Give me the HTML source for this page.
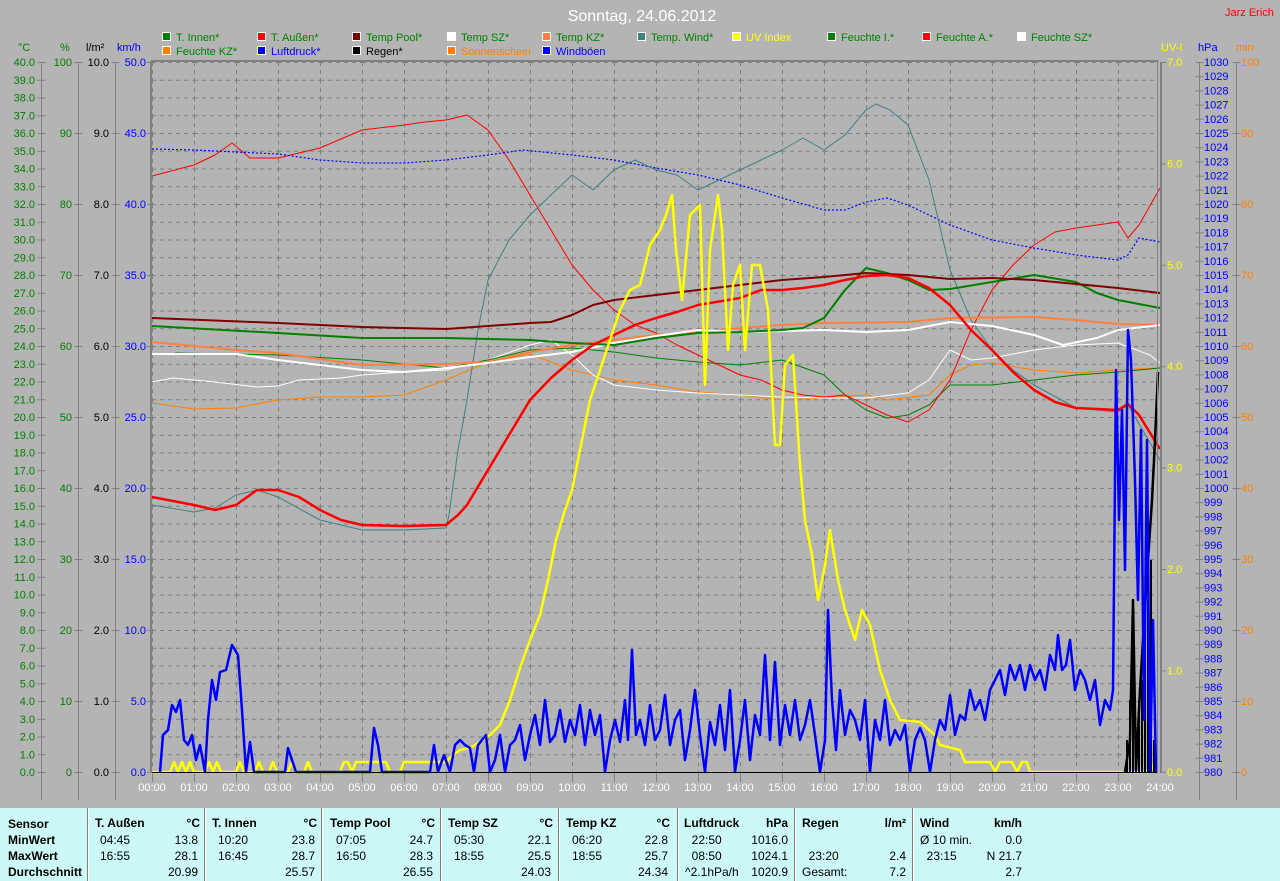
<!DOCTYPE html>
<html><head><meta charset="utf-8"><style>
body{margin:0;width:1280px;height:881px;overflow:hidden;background:#b4b4b4;font-family:"Liberation Sans",sans-serif}
svg{position:absolute;left:0;top:0}
.tb{position:absolute;left:0;top:808px;width:1280px;height:73px;background:#ccf8f8}
.c{position:absolute;font-size:12px;color:#000;white-space:nowrap}
.b{font-weight:bold}
.r{text-align:right}
.sep{position:absolute;top:0;width:1px;height:73px;background:#808080;border-right:1px solid #fff}
</style></head><body>
<svg width="1280" height="808" viewBox="0 0 1280 808" font-family="Liberation Sans, sans-serif">
<defs>
<pattern id="g" x="152" y="62" width="42" height="17.75" patternUnits="userSpaceOnUse">
<line x1="0" y1="0.5" x2="42" y2="0.5" stroke="#808080" stroke-dasharray="4,4"/>
<line x1="0.5" y1="0" x2="0.5" y2="17.75" stroke="#808080" stroke-dasharray="4,4"/>
</pattern>
</defs>
<rect x="152" y="62" width="1006" height="710" fill="url(#g)"/>
<text x="642" y="21" font-size="16" fill="#fff" text-anchor="middle">Sonntag, 24.06.2012</text>
<text x="1225" y="16" font-size="11" fill="#f00">Jarz Erich</text>
<g font-size="11">
<g stroke="#fff" stroke-width="1">
<rect x="162.5" y="32.5" width="8" height="8" fill="#008000"/><rect x="257.5" y="32.5" width="8" height="8" fill="#f00"/><rect x="352.5" y="32.5" width="8" height="8" fill="#800000"/><rect x="447.5" y="32.5" width="8" height="8" fill="#fff"/><rect x="542.5" y="32.5" width="8" height="8" fill="#ff8040"/><rect x="637.5" y="32.5" width="8" height="8" fill="#408080"/><rect x="732.5" y="32.5" width="8" height="8" fill="#ff0"/><rect x="827.5" y="32.5" width="8" height="8" fill="#008000"/><rect x="922.5" y="32.5" width="8" height="8" fill="#f00"/><rect x="1017.5" y="32.5" width="8" height="8" fill="#fff"/>
<rect x="162.5" y="46.5" width="8" height="8" fill="#ff8000"/><rect x="257.5" y="46.5" width="8" height="8" fill="#00f"/><rect x="352.5" y="46.5" width="8" height="8" fill="#000"/><rect x="447.5" y="46.5" width="8" height="8" fill="#ff8000"/><rect x="542.5" y="46.5" width="8" height="8" fill="#00f"/>
</g>
<text x="176" y="41" fill="#008000">T. Innen*</text><text x="271" y="41" fill="#008000">T. Außen*</text><text x="366" y="41" fill="#008000">Temp Pool*</text><text x="461" y="41" fill="#008000">Temp SZ*</text><text x="556" y="41" fill="#008000">Temp KZ*</text><text x="651" y="41" fill="#008000">Temp. Wind*</text><text x="746" y="41" fill="#ff0">UV Index</text><text x="841" y="41" fill="#008000">Feuchte I.*</text><text x="936" y="41" fill="#008000">Feuchte A.*</text><text x="1031" y="41" fill="#008000">Feuchte SZ*</text>
<text x="176" y="55" fill="#008000">Feuchte KZ*</text><text x="271" y="55" fill="#00f">Luftdruck*</text><text x="366" y="55" fill="#000">Regen*</text><text x="461" y="55" fill="#ff8000">Sonnenschein</text><text x="556" y="55" fill="#00f">Windböen</text>
<text x="18" y="51" fill="#008000">°C</text><text x="60" y="51" fill="#008000">%</text><text x="86" y="51" fill="#000">l/m²</text><text x="117" y="51" fill="#00f">km/h</text>
<text x="1161" y="51" fill="#ff0">UV-I</text><text x="1198" y="51" fill="#00f">hPa</text><text x="1236" y="51" fill="#ff8000">min</text>
</g>
<g stroke="#808080" fill="none">
<line x1="41.5" y1="62" x2="41.5" y2="800"/><line x1="78.5" y1="62" x2="78.5" y2="800"/><line x1="115.5" y1="62" x2="115.5" y2="800"/>
<line x1="1199.5" y1="62" x2="1199.5" y2="800"/><line x1="1236.5" y1="62" x2="1236.5" y2="800"/>
<line x1="41.5" y1="62" x2="41.5" y2="773" stroke-width="8" stroke-dasharray="1,16.75"/>
<line x1="78.5" y1="62" x2="78.5" y2="773" stroke-width="8" stroke-dasharray="1,70"/>
<line x1="115.5" y1="62" x2="115.5" y2="773" stroke-width="8" stroke-dasharray="1,70"/>
<line x1="150" y1="62" x2="150" y2="773" stroke-width="6" stroke-dasharray="1,70"/>
<line x1="1163" y1="62" x2="1163" y2="773" stroke-width="6" stroke-dasharray="1,100.4"/>
<line x1="1199.5" y1="62" x2="1199.5" y2="773" stroke-width="8" stroke-dasharray="1,13.2"/>
<line x1="1236.5" y1="62" x2="1236.5" y2="773" stroke-width="8" stroke-dasharray="1,70"/>
<line x1="152" y1="772" x2="1160" y2="772" stroke-width="10" stroke-dasharray="1,41" transform="translate(0,5)"/>
</g>
<g font-size="11" fill="#008000" text-anchor="end">
<text x="35" y="66">40.0</text><text x="35" y="83.75">39.0</text><text x="35" y="101.5">38.0</text><text x="35" y="119.25">37.0</text><text x="35" y="137">36.0</text><text x="35" y="154.75">35.0</text><text x="35" y="172.5">34.0</text><text x="35" y="190.25">33.0</text><text x="35" y="208">32.0</text><text x="35" y="225.75">31.0</text><text x="35" y="243.5">30.0</text><text x="35" y="261.25">29.0</text><text x="35" y="279">28.0</text><text x="35" y="296.75">27.0</text><text x="35" y="314.5">26.0</text><text x="35" y="332.25">25.0</text><text x="35" y="350">24.0</text><text x="35" y="367.75">23.0</text><text x="35" y="385.5">22.0</text><text x="35" y="403.25">21.0</text><text x="35" y="421">20.0</text><text x="35" y="438.75">19.0</text><text x="35" y="456.5">18.0</text><text x="35" y="474.25">17.0</text><text x="35" y="492">16.0</text><text x="35" y="509.75">15.0</text><text x="35" y="527.5">14.0</text><text x="35" y="545.25">13.0</text><text x="35" y="563">12.0</text><text x="35" y="580.75">11.0</text><text x="35" y="598.5">10.0</text><text x="35" y="616.25">9.0</text><text x="35" y="634">8.0</text><text x="35" y="651.75">7.0</text><text x="35" y="669.5">6.0</text><text x="35" y="687.25">5.0</text><text x="35" y="705">4.0</text><text x="35" y="722.75">3.0</text><text x="35" y="740.5">2.0</text><text x="35" y="758.25">1.0</text><text x="35" y="776">0.0</text>
<text x="72" y="66">100</text><text x="72" y="137">90</text><text x="72" y="208">80</text><text x="72" y="279">70</text><text x="72" y="350">60</text><text x="72" y="421">50</text><text x="72" y="492">40</text><text x="72" y="563">30</text><text x="72" y="634">20</text><text x="72" y="705">10</text><text x="72" y="776">0</text>
<g fill="#000"><text x="109" y="66">10.0</text><text x="109" y="137">9.0</text><text x="109" y="208">8.0</text><text x="109" y="279">7.0</text><text x="109" y="350">6.0</text><text x="109" y="421">5.0</text><text x="109" y="492">4.0</text><text x="109" y="563">3.0</text><text x="109" y="634">2.0</text><text x="109" y="705">1.0</text><text x="109" y="776">0.0</text></g>
<g fill="#00f"><text x="146" y="66">50.0</text><text x="146" y="137">45.0</text><text x="146" y="208">40.0</text><text x="146" y="279">35.0</text><text x="146" y="350">30.0</text><text x="146" y="421">25.0</text><text x="146" y="492">20.0</text><text x="146" y="563">15.0</text><text x="146" y="634">10.0</text><text x="146" y="705">5.0</text><text x="146" y="776">0.0</text></g>
</g>
<g font-size="11" fill="#ff0">
<text x="1167" y="66">7.0</text><text x="1167" y="167.4">6.0</text><text x="1167" y="268.8">5.0</text><text x="1167" y="370.2">4.0</text><text x="1167" y="471.6">3.0</text><text x="1167" y="573">2.0</text><text x="1167" y="674.4">1.0</text><text x="1167" y="776">0.0</text>
</g>
<g font-size="11" fill="#ff8000">
<text x="1241" y="66">100</text><text x="1241" y="137">90</text><text x="1241" y="208">80</text><text x="1241" y="279">70</text><text x="1241" y="350">60</text><text x="1241" y="421">50</text><text x="1241" y="492">40</text><text x="1241" y="563">30</text><text x="1241" y="634">20</text><text x="1241" y="705">10</text><text x="1241" y="776">0</text>
</g>
<g font-size="11" fill="#00f">
<text x="1204" y="66">1030</text><text x="1204" y="80.2">1029</text><text x="1204" y="94.4">1028</text><text x="1204" y="108.6">1027</text><text x="1204" y="122.8">1026</text><text x="1204" y="137">1025</text><text x="1204" y="151.2">1024</text><text x="1204" y="165.4">1023</text><text x="1204" y="179.6">1022</text><text x="1204" y="193.8">1021</text><text x="1204" y="208">1020</text><text x="1204" y="222.2">1019</text><text x="1204" y="236.4">1018</text><text x="1204" y="250.6">1017</text><text x="1204" y="264.8">1016</text><text x="1204" y="279">1015</text><text x="1204" y="293.2">1014</text><text x="1204" y="307.4">1013</text><text x="1204" y="321.6">1012</text><text x="1204" y="335.8">1011</text><text x="1204" y="350">1010</text><text x="1204" y="364.2">1009</text><text x="1204" y="378.4">1008</text><text x="1204" y="392.6">1007</text><text x="1204" y="406.8">1006</text><text x="1204" y="421">1005</text><text x="1204" y="435.2">1004</text><text x="1204" y="449.4">1003</text><text x="1204" y="463.6">1002</text><text x="1204" y="477.8">1001</text><text x="1204" y="492">1000</text><text x="1204" y="506.2">999</text><text x="1204" y="520.4">998</text><text x="1204" y="534.6">997</text><text x="1204" y="548.8">996</text><text x="1204" y="563">995</text><text x="1204" y="577.2">994</text><text x="1204" y="591.4">993</text><text x="1204" y="605.6">992</text><text x="1204" y="619.8">991</text><text x="1204" y="634">990</text><text x="1204" y="648.2">989</text><text x="1204" y="662.4">988</text><text x="1204" y="676.6">987</text><text x="1204" y="690.8">986</text><text x="1204" y="705">985</text><text x="1204" y="719.2">984</text><text x="1204" y="733.4">983</text><text x="1204" y="747.6">982</text><text x="1204" y="761.8">981</text><text x="1204" y="776">980</text>
</g>
<g font-size="11" fill="#fff" text-anchor="middle">
<text x="152" y="791">00:00</text><text x="194" y="791">01:00</text><text x="236" y="791">02:00</text><text x="278" y="791">03:00</text><text x="320" y="791">04:00</text><text x="362" y="791">05:00</text><text x="404" y="791">06:00</text><text x="446" y="791">07:00</text><text x="488" y="791">08:00</text><text x="530" y="791">09:00</text><text x="572" y="791">10:00</text><text x="614" y="791">11:00</text><text x="656" y="791">12:00</text><text x="698" y="791">13:00</text><text x="740" y="791">14:00</text><text x="782" y="791">15:00</text><text x="824" y="791">16:00</text><text x="866" y="791">17:00</text><text x="908" y="791">18:00</text><text x="950" y="791">19:00</text><text x="992" y="791">20:00</text><text x="1034" y="791">21:00</text><text x="1076" y="791">22:00</text><text x="1118" y="791">23:00</text><text x="1160" y="791">24:00</text>
</g>
<g fill="none" stroke-linejoin="round">
<polyline stroke="#ff8000" stroke-width="1" points="152,403 194,409 236,408 278,400 320,397 362,397 404,395 446,380 488,362 530,354 572,370 614,380 656,385 698,392 740,395 782,400 824,398 866,395 887,400 929,395 950,375 971,365 992,363 1034,370 1076,373 1118,370 1160,368"/>
<polyline stroke="#fff" stroke-width="1" points="152,382 173,378 215,382 257,387 278,386 299,380 341,378 362,375 404,372 446,370 467,365 488,360 530,345 551,340 572,355 593,375 614,385 656,390 698,393 740,395 782,397 824,398 866,398 908,393 929,380 950,350 971,360 992,358 1034,350 1076,345 1118,343 1150,355 1160,363"/>
<polyline stroke="#008000" stroke-width="1" points="175,353 278,355 362,360 446,368 488,360 530,350 572,348 614,352 656,358 698,362 740,365 782,360 824,375 845,395 866,410 887,418 908,415 929,405 950,385 992,385 1034,380 1076,375 1118,372 1160,368"/>
<polyline stroke="#f00" stroke-width="1" points="152,176 194,165 215,155 232,143 250,158 278,158 320,148 362,130 404,125 425,122 446,120 467,115 488,130 509,160 530,195 551,230 572,265 593,290 614,310 635,325 656,333 677,345 698,355 719,365 740,375 761,380 782,390 803,395 824,397 845,395 866,405 887,415 908,422 929,410 950,380 971,330 992,290 1013,265 1034,245 1055,232 1076,228 1118,222 1128,238 1139,225 1160,188"/>
<polyline stroke="#00f" stroke-width="1.2" stroke-dasharray="2,2" points="152,149 194,150 236,152 278,154 320,160 362,163 404,163 446,160 488,155 523,150 572,155 614,160 656,168 698,175 740,185 782,198 824,210 845,210 866,202 887,198 908,205 950,225 992,240 1034,248 1076,255 1118,260 1128,255 1139,238 1160,242"/>
<polyline stroke="#408080" stroke-width="1" points="152,505 194,512 215,508 236,495 257,490 278,497 320,520 362,530 404,530 446,528 449,515 458,450 467,400 478,330 488,280 509,240 530,215 551,195 572,175 593,190 614,170 635,160 656,170 677,175 698,190 719,180 740,170 761,160 782,150 803,138 824,150 845,135 866,110 876,104 890,110 908,125 929,180 950,270 971,320 992,350 1013,370 1034,385 1076,408 1118,412 1128,405 1160,460"/>
<polyline stroke="#ff8040" stroke-width="2" points="152,342 236,350 278,353 362,365 446,364 488,362 530,352 572,345 614,340 656,335 698,332 740,328 782,325 824,323 908,322 950,318 1034,317 1076,320 1118,324 1160,325"/>
<polyline stroke="#fff" stroke-width="2" points="152,354 236,354 278,360 362,370 404,372 446,368 488,363 530,357 572,352 614,343 656,336 698,330 740,332 782,331 824,330 866,332 908,330 950,322 992,326 1034,335 1063,345 1097,338 1118,330 1160,325"/>
<polyline stroke="#008000" stroke-width="2" points="152,326 278,333 362,338 446,338 530,340 572,343 614,345 656,338 698,333 740,332 782,330 803,328 824,318 845,290 866,268 887,273 908,280 929,290 950,289 992,282 1034,275 1076,282 1097,293 1118,300 1160,308"/>
<polyline stroke="#800000" stroke-width="2" points="152,318 278,323 362,327 446,329 530,323 551,322 572,315 593,305 614,300 656,295 698,290 740,285 782,280 824,277 866,273 908,275 950,279 992,278 1034,280 1076,284 1118,288 1160,293"/>
<polyline stroke="#f00" stroke-width="2.5" points="152,497 194,505 215,510 236,505 257,490 278,490 299,497 320,510 341,520 362,525 404,526 446,525 458,515 467,505 488,470 509,435 530,400 551,378 572,360 593,345 614,335 635,325 656,318 677,312 698,305 740,298 761,290 782,290 803,288 824,285 845,280 866,276 887,275 908,278 929,288 950,305 971,330 992,350 1013,372 1034,390 1055,402 1076,408 1118,410 1128,404 1139,415 1160,449"/>
<polyline stroke="#ff0" stroke-width="2.5" points="152,772 170,772 174,762 178,772 182,762 186,772 190,762 194,772 205,772 209,762 213,772 217,762 221,772 236,772 240,762 244,772 255,772 259,762 263,772 269,772 273,762 277,772 288,772 292,762 296,772 304,772 308,762 312,772 340,772 344,762 348,762 352,772 356,762 386,762 390,772 400,772 404,762 446,762 450,758 460,750 470,748 480,742 490,735 500,725 510,700 520,668 530,640 540,615 548,580 556,540 565,510 572,490 580,450 590,400 600,370 610,340 620,310 630,290 640,285 650,245 660,230 666,215 672,195 676,250 682,300 690,215 700,205 705,385 710,250 718,195 722,230 728,350 733,285 740,265 745,350 752,265 760,265 768,310 775,445 780,445 785,365 793,355 800,465 805,520 812,555 818,600 825,565 830,530 838,580 845,610 855,640 862,610 870,625 880,670 890,700 900,720 920,722 935,735 940,745 960,750 965,762 990,762 995,772 1000,762 1012,762 1017,772 1022,762 1027,762 1030,772 1150,772 1155,762 1158,762"/>
<path d="M1127 772V740M1130 772V700M1133 772V600M1136 772V760M1139 772V700M1142 772V680M1145 772V640M1148 772V600M1151 772V560M1154 772V740" stroke="#000" stroke-width="2"/>
<polyline stroke="#000" stroke-width="2.5" points="1125,772 1130,740 1133,600 1136,770 1140,690 1143,640 1148,560 1152,500 1155,440 1158,372"/>
<polyline stroke="#00f" stroke-width="2.5" points="160,772 163,735 168,730 172,705 176,712 180,700 184,740 188,745 192,735 196,760 200,745 205,772 208,720 212,680 216,700 220,672 226,670 232,645 238,655 242,710 246,772 250,742 254,772 285,772 288,748 292,760 296,772 370,772 374,728 378,745 382,772 430,772 434,745 438,772 444,755 450,772 455,745 460,740 465,745 470,748 474,772 478,745 482,740 486,735 490,772 495,760 500,735 505,772 510,745 515,740 520,725 525,760 530,735 535,715 540,745 545,700 550,742 555,735 560,710 565,742 570,720 575,735 580,705 585,745 590,710 595,735 600,715 605,772 610,740 615,720 620,742 625,700 628,740 632,650 636,735 640,720 645,745 650,705 655,740 660,730 665,695 670,745 675,720 680,710 685,760 690,730 695,690 700,735 705,772 710,722 715,745 720,705 725,750 730,690 735,772 740,740 745,700 750,760 755,715 760,735 765,655 770,740 775,662 780,745 785,705 790,735 795,700 800,740 805,725 810,700 815,735 820,772 825,740 828,610 832,700 836,750 840,690 845,735 850,710 855,720 860,740 865,700 870,772 875,720 880,740 885,700 890,745 895,730 900,740 905,725 910,772 915,740 920,728 925,740 930,772 935,740 940,720 945,730 950,695 955,735 960,715 965,720 970,690 975,710 980,700 985,720 990,690 995,680 1000,670 1005,695 1010,665 1015,680 1020,665 1025,690 1030,665 1035,680 1040,670 1045,690 1050,655 1055,670 1058,635 1062,670 1066,665 1070,640 1075,690 1080,670 1085,680 1090,700 1095,680 1100,725 1105,700 1110,710 1113,690 1116,370 1119,520 1122,410 1125,570 1128,330 1131,360 1135,480 1138,600 1141,430 1144,720 1147,440 1150,772 1153,620 1156,772"/>
</g>
<line x1="152" y1="772.5" x2="1158" y2="772.5" stroke="#000" stroke-width="1"/>
<g stroke="#808080" fill="none">
<line x1="151" y1="61" x2="1158" y2="61" stroke-width="2"/>
<line x1="151" y1="61" x2="151" y2="773" stroke-width="2"/>
<line x1="1157.5" y1="62" x2="1157.5" y2="773"/>
<line x1="1161" y1="62" x2="1161" y2="773" stroke-width="2"/>
</g>
</svg>
<div class="tb">
<div class="sep" style="left:87px"></div><div class="sep" style="left:204px"></div><div class="sep" style="left:321px"></div><div class="sep" style="left:440px"></div><div class="sep" style="left:558px"></div><div class="sep" style="left:677px"></div><div class="sep" style="left:794px"></div><div class="sep" style="left:912px"></div>
<div class="c b" style="left:8px;top:8px;line-height:16px">Sensor<br>MinWert<br>MaxWert<br>Durchschnitt</div>

<div class="c b" style="left:95px;top:8px">T. Außen</div><div class="c b r" style="left:150px;width:50px;top:8px">°C</div>
<div class="c" style="left:100px;top:24px;line-height:16px">04:45<br>16:55</div><div class="c r" style="left:140px;width:58px;top:24px;line-height:16px">13.8<br>28.1<br>20.99</div>

<div class="c b" style="left:212px;top:8px">T. Innen</div><div class="c b r" style="left:267px;width:50px;top:8px">°C</div>
<div class="c" style="left:218px;top:24px;line-height:16px">10:20<br>16:45</div><div class="c r" style="left:257px;width:58px;top:24px;line-height:16px">23.8<br>28.7<br>25.57</div>

<div class="c b" style="left:330px;top:8px">Temp Pool</div><div class="c b r" style="left:385px;width:50px;top:8px">°C</div>
<div class="c" style="left:336px;top:24px;line-height:16px">07:05<br>16:50</div><div class="c r" style="left:375px;width:58px;top:24px;line-height:16px">24.7<br>28.3<br>26.55</div>

<div class="c b" style="left:448px;top:8px">Temp SZ</div><div class="c b r" style="left:503px;width:50px;top:8px">°C</div>
<div class="c" style="left:454px;top:24px;line-height:16px">05:30<br>18:55</div><div class="c r" style="left:493px;width:58px;top:24px;line-height:16px">22.1<br>25.5<br>24.03</div>

<div class="c b" style="left:566px;top:8px">Temp KZ</div><div class="c b r" style="left:620px;width:50px;top:8px">°C</div>
<div class="c" style="left:572px;top:24px;line-height:16px">06:20<br>18:55</div><div class="c r" style="left:610px;width:58px;top:24px;line-height:16px">22.8<br>25.7<br>24.34</div>

<div class="c b" style="left:684px;top:8px">Luftdruck</div><div class="c b r" style="left:738px;width:50px;top:8px">hPa</div>
<div class="c" style="left:685px;top:24px;line-height:16px">&nbsp;&nbsp;22:50<br>&nbsp;&nbsp;08:50<br>^2.1hPa/h</div><div class="c r" style="left:728px;width:60px;top:24px;line-height:16px">1016.0<br>1024.1<br>1020.9</div>

<div class="c b" style="left:802px;top:8px">Regen</div><div class="c b r" style="left:856px;width:50px;top:8px">l/m²</div>
<div class="c" style="left:802px;top:24px;line-height:16px">&nbsp;<br>&nbsp;&nbsp;23:20<br>Gesamt:</div><div class="c r" style="left:846px;width:60px;top:24px;line-height:16px">&nbsp;<br>2.4<br>7.2</div>

<div class="c b" style="left:920px;top:8px">Wind</div><div class="c b r" style="left:972px;width:50px;top:8px">km/h</div>
<div class="c" style="left:920px;top:24px;line-height:16px">Ø 10 min.<br>&nbsp;&nbsp;23:15</div><div class="c r" style="left:962px;width:60px;top:24px;line-height:16px">0.0<br>N 21.7<br>2.7</div>
</div>
</body></html>
